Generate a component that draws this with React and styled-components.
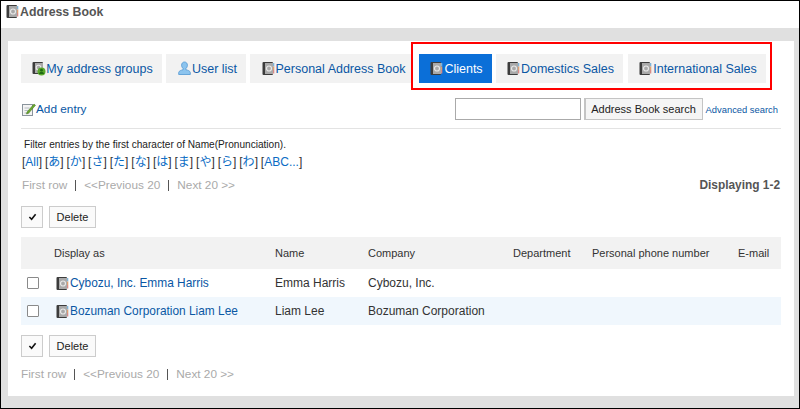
import styled, { createGlobalStyle } from 'styled-components';

const GlobalStyle = createGlobalStyle`
    html, body {
        margin: 0;
        padding: 0;
        background: #fff;
    }
    body {
        font-family: "Liberation Sans", Arial, "Noto Sans CJK JP", sans-serif;
        font-size: 12px;
        color: #333;
    }
    * {
        box-sizing: border-box;
    }
`;

const Page = styled.div`
    width: 800px;
    height: 409px;
    border: 1px solid #000;
    display: flex;
    flex-direction: column;
    overflow: hidden;
`;

const TitleBar = styled.div`
    height: 27px;
    padding: 3px 0 0 5px;
    display: flex;
    align-items: flex-start;
    font-size: 12.3px;
    font-weight: bold;
    color: #555;
    line-height: 16px;
`;

const Backdrop = styled.div`
    flex: 1;
    background: #e0e0e0;
    padding: 13px 5px 12px 7px;
    display: flex;
`;

const Panel = styled.div`
    flex: 1;
    background: #fff;
    padding: 13px 13px 0 13px;
    position: relative;
`;

const Tabs = styled.div`
    display: flex;
    height: 29px;
`;

const Tab = styled.a`
    width: ${(p) => p.$width}px;
    margin-right: ${(p) => p.$gap}px;
    padding-left: ${(p) => p.$pad}px;
    height: 29px;
    display: flex;
    align-items: center;
    justify-content: center;
    background: ${(p) => (p.$active ? '#0b6fd8' : '#f2f2f2')};
    color: ${(p) => (p.$active ? '#fff' : '#0a57a4')};
    font-size: 12.5px;
    white-space: nowrap;
`;

const Highlight = styled.div`
    position: absolute;
    left: 403px;
    top: 1px;
    width: 361px;
    height: 48px;
    border: 2px solid #f00;
    pointer-events: none;
`;

const ActionRow = styled.div`
    display: flex;
    align-items: center;
    height: 22px;
    margin-top: 15px;
    padding-right: 3px;
`;

const AddEntry = styled.a`
    display: flex;
    align-items: center;
    color: #0a57a4;
    font-size: 11.8px;
    margin-left: 1px;
`;

const SearchBox = styled.div`
    margin-left: auto;
    display: flex;
    align-items: center;
`;

const SearchInput = styled.input`
    width: 126px;
    height: 22px;
    border: 1px solid #aaa;
    background: #fff;
    padding: 0 4px;
`;

const SearchButton = styled.button`
    width: 119px;
    height: 22px;
    margin-left: 3px;
    border: 1px solid #c4c4c4;
    border-left-width: 2px;
    background: #f5f5f5;
    color: #222;
    font: 11px "Liberation Sans", Arial, sans-serif;
    padding: 0;
`;

const AdvancedLink = styled.a`
    margin-left: 3px;
    font-size: 9.4px;
    color: #0a57a4;
    white-space: nowrap;
`;

const Divider = styled.div`
    height: 1px;
    background: #e3e3e3;
    margin-top: 8px;
`;

const FilterNote = styled.div`
    margin: 9px 0 0 3px;
    font-size: 10.1px;
    line-height: 13px;
    color: #222;
`;

const CharLinks = styled.div`
    margin: 4px 0 0 1px;
    font-size: 12px;
    line-height: 15px;
    color: #333;
    white-space: nowrap;
    display: flex;
    gap: 2.9px;
`;

const CharLink = styled.span`
    a {
        color: #0a6cc4;
    }
`;

const PagerRow = styled.div`
    display: flex;
    justify-content: space-between;
    align-items: center;
    height: 16px;
    margin-top: ${(p) => p.$top}px;
    padding-left: ${(p) => p.$left}px;
`;

const Pager = styled.div`
    display: flex;
    align-items: center;
    color: #aaa;
    font-size: 11.8px;
`;

const PagerBar = styled.span`
    width: 1px;
    height: 11px;
    background: #555;
    margin: 0 8px 0 8px;
`;

const Displaying = styled.div`
    font-size: 11.9px;
    font-weight: bold;
    color: #555;
    margin-right: 1px;
`;

const ButtonRow = styled.div`
    display: flex;
    gap: 6px;
    margin-top: ${(p) => p.$top}px;
`;

const ToolButton = styled.button`
    height: 22px;
    width: ${(p) => p.$width}px;
    border: 1.5px solid #ccc;
    background: #fafafa;
    color: #222;
    font: 11px "Liberation Sans", Arial, sans-serif;
    padding: 0;
    display: flex;
    align-items: center;
    justify-content: center;
`;

const Table = styled.table`
    width: 760px;
    margin-top: 9px;
    border-collapse: collapse;
    table-layout: fixed;
    font-size: 12px;
    color: #333;
`;

const HeadRow = styled.tr`
    height: 32px;
    background: #f2f2f2;
`;

const Row = styled.tr`
    height: 28px;
    background: ${(p) => (p.$alt ? '#f0f7fd' : '#fff')};
`;

const Cell = styled.td`
    padding: 0;
    text-align: left;
    font-weight: normal;
    white-space: nowrap;
`;

const HeadCell = styled(Cell).attrs({ as: 'th' })`
    color: #333;
    font-size: 11px;
`;

const CheckBox = styled.span`
    display: block;
    width: 12px;
    height: 12px;
    margin-left: 6px;
    border: 1px solid #8a8a8a;
    border-radius: 1px;
    background: #fff;
`;

const NameLink = styled.a`
    display: flex;
    align-items: center;
    color: #0a57a4;
    font-size: 11.9px;
    margin-left: 2px;
`;

const BookIcon = () => (
    <svg width="14" height="15" viewBox="0 0 14 15" style={{ flexShrink: 0 }}>
        <rect x="0.500" y="1" width="10.500" height="13" rx="1" fill="#3c3c3c" />
        <rect x="3" y="2" width="8" height="11" fill="#a9a9a9" />
        <circle cx="7" cy="7.500" r="2.500" fill="none" stroke="#e8e8e8" strokeWidth="1.200" />
        <rect x="11" y="2" width="1.300" height="3.500" fill="#7fb4d8" />
        <rect x="11" y="5.500" width="1.300" height="3.500" fill="#e0a070" />
        <rect x="11" y="9" width="1.300" height="3.500" fill="#d98a86" />
    </svg>
);

const GroupIcon = () => (
    <svg width="14" height="15" viewBox="0 0 14 15" style={{ flexShrink: 0 }}>
        <rect x="0.500" y="1" width="10.500" height="12" rx="1" fill="#3c3c3c" />
        <rect x="3" y="2" width="8" height="10" fill="#a9a9a9" />
        <circle cx="6.500" cy="6.500" r="2.300" fill="none" stroke="#e8e8e8" strokeWidth="1.100" />
        <circle cx="9.500" cy="10.500" r="4" fill="#5aa82c" />
        <circle cx="9.500" cy="9.200" r="1.400" fill="#1f6b12" />
        <path d="M7 13c.3-1.600 1.200-2.300 2.500-2.300S11.700 11.400 12 13z" fill="#1f6b12" />
    </svg>
);

const UserIcon = () => (
    <svg width="15" height="15" viewBox="0 0 15 15" style={{ flexShrink: 0 }}>
        <path
            d="M7.500 1C5.700 1 4.600 2.400 4.600 4.200c0 1.400.7 2.600 1.500 3.300v1.200c-1.800.5-4.100 1-4.400 2.800V13.500h11.600v-2c-.3-1.800-2.600-2.300-4.400-2.800V7.500c.8-.7 1.500-1.900 1.500-3.300C10.400 2.400 9.300 1 7.500 1z"
            fill="#8cc4ee"
            stroke="#4f97d3"
            strokeWidth="0.800"
        />
    </svg>
);

const EntryIcon = () => (
    <svg width="14" height="15" viewBox="0 0 14 15" style={{ flexShrink: 0 }}>
        <rect x="0.500" y="2.500" width="10" height="11" fill="#f4f4f4" stroke="#8a949c" />
        <path d="M2.500 6h5M2.500 8.500h4M2.500 11h5" stroke="#a8b0b8" strokeWidth="0.800" />
        <path d="M5 10l7-8 1.500 1.300-7 8L4.500 12z" fill="#6aa82e" stroke="#3f6f18" strokeWidth="0.500" />
    </svg>
);

const CheckMark = () => (
    <svg width="9" height="8" viewBox="0 0 10 9">
        <path d="M1.500 4.500L4 7l4.500-5.500" fill="none" stroke="#111" strokeWidth="1.800" />
    </svg>
);

const tabs = [
    { label: 'My address groups', width: 141, gap: 4, pad: 2, icon: <GroupIcon /> },
    { label: 'User list', width: 80, gap: 4, pad: 2, icon: <UserIcon /> },
    { label: 'Personal Address Book', width: 162, gap: 7, pad: 5, icon: <BookIcon /> },
    { label: 'Clients', width: 73, gap: 4, pad: 2, active: true, icon: <BookIcon /> },
    { label: 'Domestics Sales', width: 127, gap: 5, pad: 2, icon: <BookIcon /> },
    { label: 'International Sales', width: 138, gap: 0, pad: 2, icon: <BookIcon /> },
];

const chars = ['All', 'あ', 'か', 'さ', 'た', 'な', 'は', 'ま', 'や', 'ら', 'わ', 'ABC...'];

const columns = [
    { label: '', width: 33 },
    { label: 'Display as', width: 221 },
    { label: 'Name', width: 93 },
    { label: 'Company', width: 145 },
    { label: 'Department', width: 79 },
    { label: 'Personal phone number', width: 146 },
    { label: 'E-mail', width: 43 },
];

const rows = [
    { title: 'Cybozu, Inc. Emma Harris', name: 'Emma Harris', company: 'Cybozu, Inc.' },
    { title: 'Bozuman Corporation Liam Lee', name: 'Liam Lee', company: 'Bozuman Corporation', alt: true },
];

const PagerLinks = () => (
    <Pager>
        First row
        <PagerBar />
        {'<<Previous 20'}
        <PagerBar />
        {'Next 20 >>'}
    </Pager>
);

const Buttons = ({ top }) => (
    <ButtonRow $top={top}>
        <ToolButton $width={22}>
            <CheckMark />
        </ToolButton>
        <ToolButton $width={47}>Delete</ToolButton>
    </ButtonRow>
);

const App = () => {
    return (
        <Page>
            <GlobalStyle />
            <TitleBar>
                <BookIcon />
                Address Book
            </TitleBar>
            <Backdrop>
                <Panel>
                    <Tabs>
                        {tabs.map((tab) => (
                            <Tab key={tab.label} $width={tab.width} $gap={tab.gap} $pad={tab.pad} $active={tab.active}>
                                {tab.icon}
                                {tab.label}
                            </Tab>
                        ))}
                    </Tabs>
                    <Highlight />
                    <ActionRow>
                        <AddEntry>
                            <EntryIcon />
                            Add entry
                        </AddEntry>
                        <SearchBox>
                            <SearchInput type="text" />
                            <SearchButton type="button">Address Book search</SearchButton>
                            <AdvancedLink>Advanced search</AdvancedLink>
                        </SearchBox>
                    </ActionRow>
                    <Divider />
                    <FilterNote>Filter entries by the first character of Name(Pronunciation).</FilterNote>
                    <CharLinks>
                        {chars.map((c) => (
                            <CharLink key={c}>
                                [<a>{c}</a>]
                            </CharLink>
                        ))}
                    </CharLinks>
                    <PagerRow $top={7} $left={1}>
                        <PagerLinks />
                        <Displaying>Displaying 1-2</Displaying>
                    </PagerRow>
                    <Buttons top={13} />
                    <Table>
                        <colgroup>
                            {columns.map((col) => (
                                <col key={col.label} width={col.width} />
                            ))}
                        </colgroup>
                        <thead>
                            <HeadRow>
                                {columns.map((col) => (
                                    <HeadCell key={col.label}>{col.label}</HeadCell>
                                ))}
                            </HeadRow>
                        </thead>
                        <tbody>
                            {rows.map((row) => (
                                <Row key={row.title} $alt={row.alt}>
                                    <Cell>
                                        <CheckBox />
                                    </Cell>
                                    <Cell>
                                        <NameLink>
                                            <BookIcon />
                                            {row.title}
                                        </NameLink>
                                    </Cell>
                                    <Cell>{row.name}</Cell>
                                    <Cell>{row.company}</Cell>
                                    <Cell />
                                    <Cell />
                                    <Cell />
                                </Row>
                            ))}
                        </tbody>
                    </Table>
                    <Buttons top={10} />
                    <PagerRow $top={9} $left={0}>
                        <PagerLinks />
                    </PagerRow>
                </Panel>
            </Backdrop>
        </Page>
    );
};

export default App;
